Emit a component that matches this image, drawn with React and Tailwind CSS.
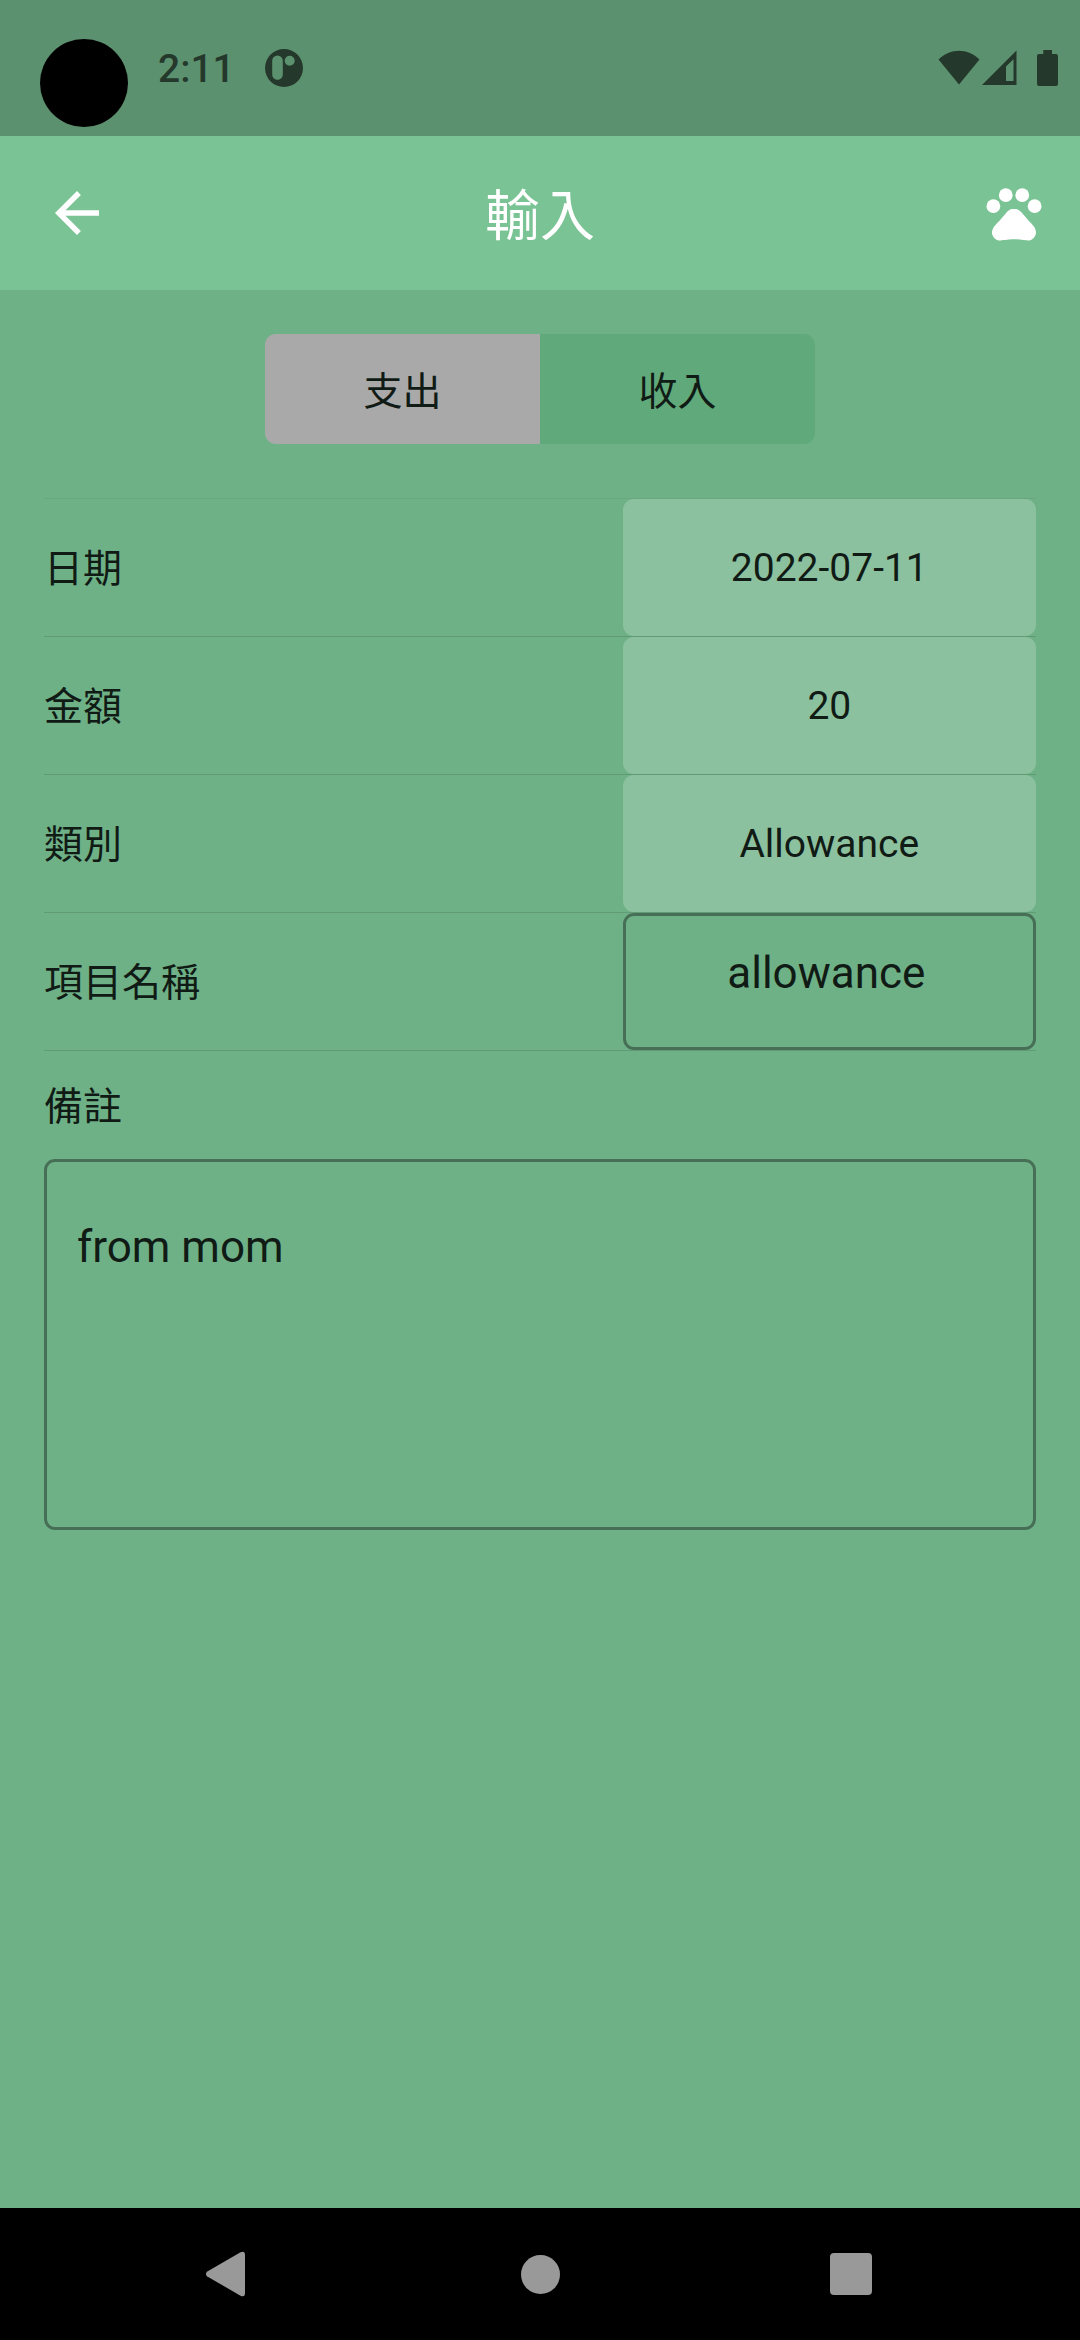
import React, { useState } from "react";
import { MdArrowBack, MdPets } from "react-icons/md";

function StatusBar() {
  return (
    <div className="flex h-[136px] shrink-0 items-center bg-[#5c916f] pr-[22px] pl-10 text-[#24392c]">
      <div className="mt-[30px] size-[88px] rounded-full bg-black" />
      <time className="ml-[30px] pt-[2px] text-[39px] leading-[48px] font-medium">2:11</time>
      <svg className="ml-[30px] size-[38px]" viewBox="0 0 38 38" aria-hidden="true">
        <path
          fill="currentColor"
          fillRule="evenodd"
          d="M19 0a19 19 0 1 1 0 38a19 19 0 0 1 0-38zM12.5 6.500a5.300 5.300 0 0 0-5.300 5.300v13.700a5.300 5.300 0 0 0 10.600 0v-13.700a5.300 5.300 0 0 0-5.300-5.300zM24.700 6.800a5 5 0 1 0 0 10a5 5 0 0 0 0-10z"
        />
      </svg>
      <div className="ml-auto flex items-center" aria-hidden="true">
        <svg className="h-9 w-[42px]" viewBox="0 0 42 36" fill="currentColor">
          <path d="M0.500 9.500C12-2.300 30-2.300 41.500 9.500L21 34.500z" />
        </svg>
        <svg className="ml-[2px] h-9 w-[35px]" viewBox="0 0 35 36" fill="currentColor">
          <path fillRule="evenodd" d="M0 35L34.500 0.500V35zM24 31h7.500V9.300L24 16.500z" />
        </svg>
        <svg className="ml-5 h-9 w-[21px]" viewBox="0 0 21 36" fill="currentColor">
          <path d="M6.300 0h8.700v4h4a2 2 0 0 1 2 2v28a2 2 0 0 1-2 2H2a2 2 0 0 1-2-2V6a2 2 0 0 1 2-2h4.300z" />
        </svg>
      </div>
    </div>
  );
}

function AppBar() {
  return (
    <header className="grid h-[154px] shrink-0 grid-cols-[1fr_auto_1fr] items-center bg-[#7ac395] px-[33px] text-white">
      <button type="button" aria-label="返回" className="justify-self-start pl-[11px]">
        <MdArrowBack className="size-[66px]" />
      </button>
      <h1 className="pt-[6px] text-[55px] leading-[80px]">輸入</h1>
      <button type="button" aria-label="寵物" className="justify-self-end">
        <MdPets className="size-[66px]" />
      </button>
    </header>
  );
}

function TypeSwitch() {
  const [type, setType] = useState("income");
  return (
    <div className="mx-auto grid h-[110px] w-[550px] grid-cols-2 overflow-hidden rounded-[11px]">
      <button
        type="button"
        aria-pressed={type === "expense"}
        onClick={() => setType("expense")}
        className="bg-[#a9a9a9] pt-[6px]"
      >
        支出
      </button>
      <button
        type="button"
        aria-pressed={type === "income"}
        onClick={() => setType("income")}
        className="bg-[#60a97b] pt-[6px]"
      >
        收入
      </button>
    </div>
  );
}

function PickerRow({ id, label, value }) {
  return (
    <div className="grid h-[138px] grid-cols-12 items-stretch border-b border-[#619b76]">
      <span id={id} className="col-span-7 flex items-center pt-[2px]">
        {label}
      </span>
      <button type="button" aria-labelledby={id} className="col-span-5 rounded-[11px] bg-[#8cc19f]">
        {value}
      </button>
    </div>
  );
}

function NavBar() {
  return (
    <nav className="flex h-[132px] shrink-0 items-center justify-between bg-black px-[204px] text-[#999999]">
      <button type="button" aria-label="上一頁">
        <svg className="size-[46px]" viewBox="0 0 46 46" fill="currentColor">
          <path d="M3.300 20.500L36.500 1.300Q41 -0.500 41 4V42Q41 46.500 36.500 44.700L3.300 25.500Q0.500 23 3.300 20.500z" />
        </svg>
      </button>
      <button type="button" aria-label="主畫面" className="size-[39px] rounded-full bg-current" />
      <button type="button" aria-label="最近使用" className="mr-1 size-[42px] rounded-[4px] bg-current" />
    </nav>
  );
}

export default function App() {
  return (
    <div className="flex min-h-screen flex-col bg-[#6fb187] font-[Roboto,'Noto_Sans_CJK_TC',sans-serif] text-[39px] leading-[56px] text-[#111b15]">
      <StatusBar />
      <AppBar />
      <main className="flex-1 px-11 pt-11">
        <TypeSwitch />
        <div className="mt-[54px] border-t border-[#69a77f]">
          <PickerRow id="date" label="日期" value="2022-07-11" />
          <PickerRow id="amount" label="金額" value="20" />
          <PickerRow id="category" label="類別" value="Allowance" />
          <div className="grid h-[138px] grid-cols-12 items-stretch border-b border-[#619b76]">
            <label htmlFor="name" className="col-span-7 flex items-center pt-[2px]">
              項目名稱
            </label>
            <input
              id="name"
              type="text"
              defaultValue="allowance"
              className="col-span-5 min-w-0 rounded-[11px] border-[3px] border-[#466f55] bg-transparent pr-[6px] pb-[18px] text-center text-[44px] outline-none"
            />
          </div>
        </div>
        <label htmlFor="memo" className="mt-7 block">
          備註
        </label>
        <textarea
          id="memo"
          defaultValue="from mom"
          className="mt-6 block h-[371px] w-full resize-none rounded-[11px] border-[3px] border-[#466f55] bg-transparent px-[30px] py-[57px] text-[44px] leading-[56px] outline-none"
        />
      </main>
      <NavBar />
    </div>
  );
}
